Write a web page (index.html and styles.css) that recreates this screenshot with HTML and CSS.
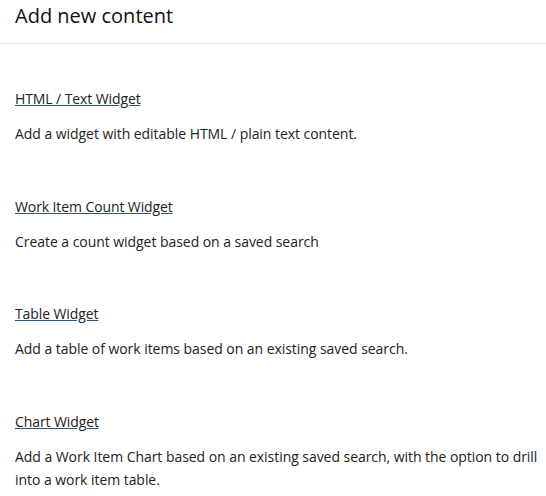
FILE: index.html
```html
<!DOCTYPE html>
<html>
<head>
<meta charset="utf-8">
<link rel="stylesheet" href="styles.css">
</head>
<body>
<header class="header"><h1 class="title">Add new content</h1></header>
<main class="list">
  <section class="item">
    <a class="item-link" href="#">HTML / Text Widget</a>
    <p class="item-desc">Add a widget with editable HTML / plain text content.</p>
  </section>
  <section class="item">
    <a class="item-link" href="#">Work Item Count Widget</a>
    <p class="item-desc">Create a count widget based on a saved search</p>
  </section>
  <section class="item">
    <a class="item-link" href="#">Table Widget</a>
    <p class="item-desc">Add a table of work items based on an existing saved search.</p>
  </section>
  <section class="item">
    <a class="item-link" href="#">Chart Widget</a>
    <p class="item-desc">Add a Work Item Chart based on an existing saved search, with the option to drill into a work item table.</p>
  </section>
</main>
</body>
</html>
```
FILE: styles.css
```css
html, body { margin: 0; padding: 0; background: #fff; }
body { font-family: "Open Sans", sans-serif; color: #222; }
.header { height: 44px; border-bottom: 1px solid #e6e6e6; padding: 0 15px; box-sizing: border-box; display: flex; align-items: center; }
.title { margin: 0; font-size: 20px; font-weight: 400; color: #111; line-height: 1; margin-top: -12px; }
.list { padding: 43px 0 0 15px; }
.item { margin-bottom: 49.5px; }
.item:last-child { margin-bottom: 0; }
.item-link { display: inline-block; font-size: 14px; color: #222; text-decoration: underline; text-decoration-color: #2a5a6e; line-height: 22px; letter-spacing: -0.1px; }
.item-desc { margin: 12px 0 0; font-size: 14px; line-height: 23px; color: #222; letter-spacing: -0.05px; }
```
